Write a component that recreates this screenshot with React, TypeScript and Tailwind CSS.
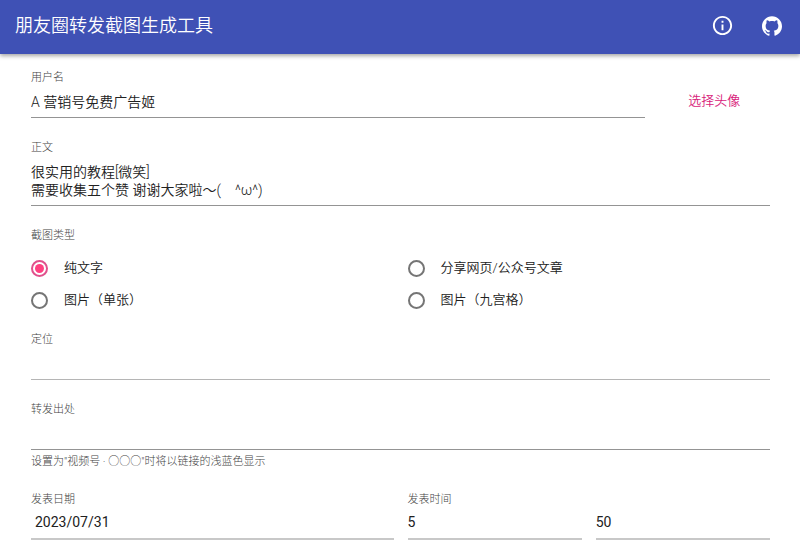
import { useState } from "react";
import type { ReactNode } from "react";
import { MdInfoOutline } from "react-icons/md";
import { SiGithub } from "react-icons/si";

const shotTypes = [
  { value: "text", label: "纯文字" },
  { value: "link", label: "分享网页/公众号文章" },
  { value: "single", label: "图片（单张）" },
  { value: "grid", label: "图片（九宫格）" },
];

const labelStyle = "block text-[11px] leading-4 font-light text-[#444]";
const inputStyle = "block w-full h-8 pb-0.5 bg-transparent text-sm text-[#212121] outline-none";

interface FieldProps {
  id: string;
  label: string;
  className?: string;
  children: ReactNode;
}

function Field({ id, label, className, children }: FieldProps) {
  return (
    <div className={className}>
      <label htmlFor={id} className={labelStyle}>
        {label}
      </label>
      {children}
    </div>
  );
}

export default function App() {
  const [name, setName] = useState("A 营销号免费广告姬");
  const [content, setContent] = useState("很实用的教程[微笑]\n需要收集五个赞 谢谢大家啦～(　^ω^)");
  const [type, setType] = useState("text");
  const [place, setPlace] = useState("");
  const [source, setSource] = useState("");
  const [date, setDate] = useState("2023/07/31");
  const [hour, setHour] = useState("5");
  const [minute, setMinute] = useState("50");

  return (
    <div lang="zh-CN" className="bg-white font-[Roboto,'Noto_Sans_CJK_SC',sans-serif] text-[#212121]">
      <header className="relative flex h-[54px] items-center justify-between bg-[#3f51b5] pr-[18px] pb-[3px] pl-[15px] text-white shadow-[0_2px_4px_rgba(0,0,0,0.35)]">
        <h1 className="text-lg font-[350]">朋友圈转发截图生成工具</h1>
        <nav className="flex items-center gap-[28px]">
          <button type="button" aria-label="关于">
            <MdInfoOutline className="size-[23px]" />
          </button>
          <a href="#github" aria-label="GitHub">
            <SiGithub className="size-5" />
          </a>
        </nav>
      </header>

      <form className="flex flex-col gap-[22px] pt-4 pr-[30px] pb-6 pl-[31px]">
        <div className="grid grid-cols-12 gap-x-3.5">
          <Field id="name" label="用户名" className="col-span-10">
            <input
              id="name"
              className={`${inputStyle} border-b border-[#949494] font-[350]`}
              value={name}
              onChange={(e) => setName(e.target.value)}
            />
          </Field>
          <div className="col-span-2 flex items-center justify-center pt-3.5">
            <button type="button" className="h-8 px-3 text-[13px] font-[350] text-[#d81b7a]">
              选择头像
            </button>
          </div>
        </div>

        <Field id="content" label="正文">
          <textarea
            id="content"
            rows={2}
            className="block w-full resize-none overflow-hidden border-b border-[#949494] pt-[7px] pb-1.5 text-sm leading-[18px] font-[350] outline-none"
            value={content}
            onChange={(e) => setContent(e.target.value)}
          />
        </Field>

        <fieldset className="-mb-1.5">
          <legend className={labelStyle}>截图类型</legend>
          <div className="grid grid-cols-2 gap-x-3.5 pt-2">
            {shotTypes.map((t) => (
              <label key={t.value} className="flex h-8 items-center gap-4 text-[13px] font-[350]">
                <input
                  type="radio"
                  name="type"
                  value={t.value}
                  checked={type === t.value}
                  onChange={() => setType(t.value)}
                  className="size-[17px] appearance-none rounded-full border-2 border-[#757575] bg-clip-content p-[2px] checked:border-[#e0508c] checked:bg-[#ff4081]"
                />
                {t.label}
              </label>
            ))}
          </div>
        </fieldset>

        <Field id="place" label="定位">
          <input
            id="place"
            className={`${inputStyle} border-b border-[#b5b5b5]`}
            value={place}
            onChange={(e) => setPlace(e.target.value)}
          />
        </Field>

        <Field id="source" label="转发出处">
          <input
            id="source"
            aria-describedby="source-help"
            className={`${inputStyle} border-b border-[#949494]`}
            value={source}
            onChange={(e) => setSource(e.target.value)}
          />
          <p id="source-help" className="pt-1 text-[11px] leading-4 font-light text-[#444]">
            设置为"视频号 · ○○○"时将以链接的浅蓝色显示
          </p>
        </Field>

        <div className="grid grid-cols-4 items-end gap-x-3.5">
          <Field id="date" label="发表日期" className="col-span-2">
            <input
              id="date"
              className={`${inputStyle} border-b-2 border-[#c8c8c8] pl-1`}
              value={date}
              onChange={(e) => setDate(e.target.value)}
            />
          </Field>
          <Field id="hour" label="发表时间">
            <input
              id="hour"
              className={`${inputStyle} border-b-2 border-[#c8c8c8]`}
              value={hour}
              onChange={(e) => setHour(e.target.value)}
            />
          </Field>
          <input
            aria-label="分钟"
            className={`${inputStyle} border-b-2 border-[#c8c8c8]`}
            value={minute}
            onChange={(e) => setMinute(e.target.value)}
          />
        </div>
      </form>
    </div>
  );
}
